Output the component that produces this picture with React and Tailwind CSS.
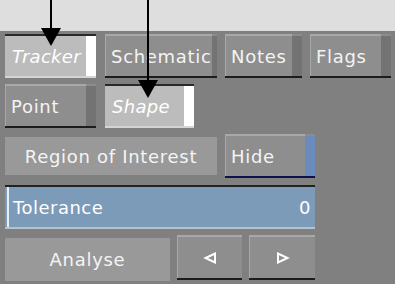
import React from "react";

const Btn = ({ w, label, strip = "bg-[#737373]", base = "bg-[#1c1c1c]", className = "" }) => {
  return (
    <div className={`flex flex-col h-[44px] ${w} ${className}`}>
      <div className="flex flex-1">
        <div className="flex-1 flex flex-col bg-[#8e8e8e] border-t-2 border-l border-[#a8a8a8]">
          <span className="flex-1 flex items-center pl-[5px] text-[18px] tracking-[0.7px] text-[#f4f4f4]">{label}</span>
        </div>
        <div className={`w-[10px] border-t-2 border-[#8c8c8c] ${strip}`} />
      </div>
      <div className={`h-[2px] ${base}`} />
    </div>
  );
};

const Selected = ({ w, label, className = "" }) => {
  return (
    <div className={`flex flex-col h-[44px] ${w} ${className}`}>
      <div className="h-[2px] bg-[#2a2a2a]" />
      <div className="flex flex-1">
        <span className="flex-1 flex items-center pl-[7px] bg-[#bcbcbc] text-[18px] tracking-[0.3px] italic text-white">
          {label}
        </span>
        <div className="w-[10px] bg-white" />
      </div>
      <div className="h-[2px] bg-[#d4d4d4]" />
    </div>
  );
};

const Flat = ({ w, label, className = "" }) => (
  <div className={`flex items-center justify-center bg-[#999999] text-[18px] tracking-[0.7px] text-[#f4f4f4] ${w} ${className}`}>
    {label}
  </div>
);

const Tri = ({ dir }) => (
  <svg width="14" height="12" viewBox="0 0 14 12">
    {dir === "left" ? (
      <polygon points="12,1.5 12,10.5 2.5,6" fill="none" stroke="white" strokeWidth="2" />
    ) : (
      <polygon points="2,1.5 2,10.5 11.5,6" fill="none" stroke="white" strokeWidth="2" />
    )}
  </svg>
);

const ArrowBtn = ({ w, dir, className = "" }) => (
  <div className={`flex flex-col h-[45px] ${w} ${className}`}>
    <div className="flex-1 flex items-center justify-center bg-[#8e8e8e] border-t-2 border-l border-[#a8a8a8]">
      <Tri dir={dir} />
    </div>
    <div className="h-[2px] bg-[#1c1c1c]" />
  </div>
);

export default function App() {
  return (
    <div
      className="relative w-[395px] h-[284px] overflow-hidden bg-[#808080]"
      style={{ fontFamily: "'DejaVu Sans', sans-serif" }}
    >
      <div className="h-[31px] bg-[#dedede]" />
      <div className="pl-[5px] pt-[3px] flex flex-col">
        <div className="flex">
          <Selected w="w-[91px]" label="Tracker" />
          <Btn w="w-[112px]" label="Schematic" className="ml-[9px]" />
          <Btn w="w-[77px]" label="Notes" className="ml-[8px]" />
          <Btn w="w-[81px]" label="Flags" className="ml-[8px]" />
        </div>
        <div className="flex mt-[6px]">
          <Btn w="w-[91px]" label="Point" />
          <Selected w="w-[89px]" label="Shape" className="ml-[9px]" />
        </div>
        <div className="flex mt-[6px] h-[44px]">
          <Flat w="w-[212px]" label="Region of Interest" className="my-[3px]" />
          <Btn w="w-[90px]" label="Hide" className="ml-[8px]" strip="bg-[#6a8bbb]" base="bg-[#10104a]" />
        </div>
        <div className="flex flex-col mt-[7px] w-[310px] h-[44px]">
          <div className="h-[2px] bg-[#222222]" />
          <div className="flex-1 flex items-center bg-[#7b9bb9] border-l-2 border-[#7b9bb9] text-[18px] tracking-[0.5px] text-white">
            <div className="w-[2px] h-full bg-[#e6eef6]" />
            <span className="flex-1 pl-[4px]">Tolerance</span>
            <span className="pr-[4px]">0</span>
          </div>
          <div className="h-[2px] bg-[#b8c2cc]" />
        </div>
        <div className="flex mt-[6px] h-[46px]">
          <Flat w="w-[165px]" label="Analyse" className="mt-[3px]" />
          <ArrowBtn w="w-[65px]" dir="left" className="ml-[7px]" />
          <ArrowBtn w="w-[66px]" dir="right" className="ml-[7px]" />
        </div>
      </div>
      <svg className="absolute left-0 top-0" width="395" height="284">
        <rect x="50" y="0" width="2" height="30" fill="black" />
        <polygon points="41,28 61,28 51,46" fill="black" />
        <rect x="147" y="0" width="2" height="82" fill="black" />
        <polygon points="138,80 158,80 148,98" fill="black" />
      </svg>
    </div>
  );
}
